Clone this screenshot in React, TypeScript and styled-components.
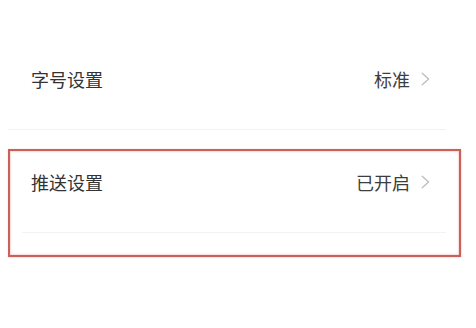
import React from "react";
import styled, { createGlobalStyle } from "styled-components";

const Global = createGlobalStyle`
  html, body { margin: 0; padding: 0; background: #ffffff; }
  body { font-family: "Noto Sans CJK SC", "Noto Sans", sans-serif; }
`;

const Page = styled.div`
  width: 476px;
  height: 328px;
  background: #ffffff;
  padding-top: 27px;
  box-sizing: border-box;
  overflow: hidden;
`;

const List = styled.div`
  display: flex;
  flex-direction: column;
`;

const RowWrap = styled.div`
  position: relative;
`;

const Row = styled.div<{ $dividerLeft: number }>`
  height: 103px;
  display: flex;
  align-items: center;
  justify-content: space-between;
  padding: 0 46px 0 31px;
  box-sizing: border-box;
  position: relative;
  &::after {
    content: "";
    position: absolute;
    left: ${(p) => p.$dividerLeft}px;
    right: 30px;
    bottom: 0;
    height: 1px;
    background: #f2f2f2;
  }
`;

const Label = styled.span`
  font-size: 18px;
  color: #333333;
  line-height: 1;
`;

const Right = styled.div`
  display: flex;
  align-items: center;
  gap: 11px;
`;

const Value = styled.span`
  font-size: 18px;
  color: #3d3d3d;
  line-height: 1;
`;

const Highlight = styled.div`
  position: absolute;
  left: 8px;
  top: 19px;
  width: 453px;
  height: 108px;
  box-sizing: border-box;
  border: 2.5px solid #c8605c;
  box-shadow: 0 0 1.5px 0.5px rgba(230, 120, 110, 0.55),
    inset 0 0 1.5px 0.5px rgba(230, 120, 110, 0.45);
  pointer-events: none;
`;

const Chevron = () => (
  <svg width="9" height="14" viewBox="0 0 9 14" fill="none">
    <path d="M1.2 1.2 L7.6 7 L1.2 12.8" stroke="#bdbdbd" strokeWidth="1.3" strokeLinecap="round" strokeLinejoin="round" />
  </svg>
);

export default function App() {
  return (
    <>
      <Global />
      <Page>
        <List>
          <Row $dividerLeft={8}>
            <Label>字号设置</Label>
            <Right>
              <Value>标准</Value>
              <Chevron />
            </Right>
          </Row>
          <RowWrap>
            <Row $dividerLeft={22}>
              <Label>推送设置</Label>
              <Right>
                <Value>已开启</Value>
                <Chevron />
              </Right>
            </Row>
            <Highlight />
          </RowWrap>
        </List>
      </Page>
    </>
  );
}
